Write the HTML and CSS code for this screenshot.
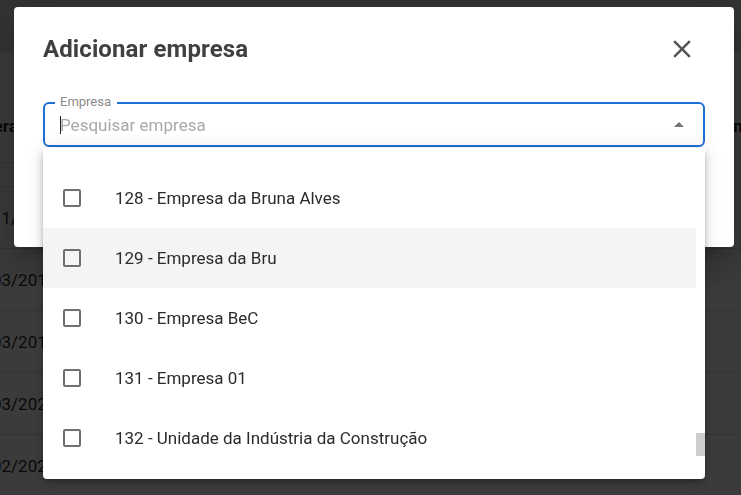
FILE: index.html
```html
<!DOCTYPE html>
<html lang="pt-BR">
<head>
<meta charset="utf-8">
<title>Adicionar empresa</title>
<link rel="stylesheet" href="styles.css">
</head>
<body>
<div class="page">
  <div class="topbar"></div>
  <div class="table">
    <div class="thead">
      <div class="th">Geração</div>
      <div class="th">Unidade</div>
    </div>
    <div class="filter"></div>
    <div class="tr"><span class="td">11/2018</span></div>
    <div class="tr"><span class="td">03/2019</span></div>
    <div class="tr"><span class="td">03/2019</span></div>
    <div class="tr"><span class="td">03/2020</span></div>
    <div class="tr"><span class="td">02/2020</span></div>
  </div>
</div>

<div class="backdrop"></div>

<div class="modal" role="dialog">
  <div class="modal-head">
    <h2 class="title">Adicionar empresa</h2>
    <button class="close" aria-label="Fechar">
      <svg width="24" height="24" viewBox="0 0 24 24"><path d="M19 6.41 17.59 5 12 10.59 6.41 5 5 6.41 10.59 12 5 17.59 6.41 19 12 13.41 17.59 19 19 17.59 13.41 12z" fill="#555"/></svg>
    </button>
  </div>
  <div class="field">
    <span class="label">Empresa</span>
    <span class="caret"></span>
    <span class="placeholder">Pesquisar empresa</span>
    <svg class="arrow" width="24" height="24" viewBox="0 0 24 24"><path d="M7 14l5-5 5 5z" fill="#757575"/></svg>

    <div class="dropdown">
      <ul class="list">
        <li class="item"><span class="box"></span><span class="text">128 - Empresa da Bruna Alves</span></li>
        <li class="item hover"><span class="box"></span><span class="text">129 - Empresa da Bru</span></li>
        <li class="item"><span class="box"></span><span class="text">130 - Empresa BeC</span></li>
        <li class="item"><span class="box"></span><span class="text">131 - Empresa 01</span></li>
        <li class="item"><span class="box"></span><span class="text">132 - Unidade da Indústria da Construção</span></li>
      </ul>
      <div class="scrollbar"><div class="thumb"></div></div>
    </div>
  </div>
</div>
</body>
</html>
```
FILE: styles.css
```css
* { box-sizing: border-box; }
html, body { margin: 0; padding: 0; }
body {
  font-family: Roboto, "Noto Sans", "Liberation Sans", sans-serif;
  width: 741px;
  height: 495px;
  overflow: hidden;
  background: #fff;
}

/* background page */
.page {
  width: 741px;
  height: 495px;
  overflow: hidden;
  background: #fff;
  color: rgba(0,0,0,0.87);
}
.topbar {
  height: 53px;
  background: #dcdcdc;
  border-bottom: 1px solid #e6e6e6;
}
.table {
  margin-left: -5px;
  width: 800px;
}
.thead {
  display: grid;
  grid-template-columns: 740px auto;
  margin-left: -13px;
  height: 110px;
  align-items: end;
  padding-bottom: 26px;
  border-bottom: 1px solid #dcdcdc;
  font-weight: 700;
  font-size: 17px;
}
.filter {
  height: 24px;
  border-bottom: 1px solid #dcdcdc;
}
.tr {
  height: 62px;
  display: flex;
  align-items: center;
  border-bottom: 1px solid #dcdcdc;
  font-size: 17px;
}
.td { margin-left: -3px; }

.backdrop {
  position: fixed;
  inset: 0;
  background: rgba(0,0,0,0.77);
}

/* dialog */
.modal {
  position: fixed;
  left: 14px;
  top: 7px;
  width: 720px;
  height: 240px;
  background: #fff;
  border-radius: 4px;
  padding: 27px 29px 0 29px;
  box-shadow: 0 11px 15px -7px rgba(0,0,0,.2), 0 24px 38px 3px rgba(0,0,0,.14), 0 9px 46px 8px rgba(0,0,0,.12);
}
.modal-head {
  display: flex;
  align-items: center;
  justify-content: space-between;
  height: 30px;
}
.title {
  margin: 0;
  font-size: 24px;
  font-weight: 700;
  color: #404040;
  letter-spacing: 0.1px;
}
.close {
  border: 0;
  background: none;
  padding: 0;
  margin-right: 8px;
  width: 30px;
  height: 30px;
  display: flex;
  align-items: center;
  justify-content: center;
}
.close svg { width: 30px; height: 30px; }

.field {
  position: relative;
  margin-top: 38px;
  height: 45px;
  border: 2px solid #1e70d4;
  border-radius: 6px;
  display: flex;
  align-items: center;
  padding-left: 15px;
}
.label {
  position: absolute;
  left: 10px;
  top: -10px;
  padding: 0 6px 0 5px;
  background: #fff;
  font-size: 13px;
  line-height: 16px;
  color: #8a8a8a;
}
.caret {
  width: 1px;
  height: 18px;
  background: #222;
  margin-right: -1px;
}
.placeholder {
  font-size: 17px;
  color: #a9a9a9;
  flex: 1;
}
.arrow {
  margin-right: 12px;
}

.dropdown {
  position: absolute;
  left: -2px;
  right: -2px;
  top: 44px;
  height: 331px;
  background: #fff;
  border-radius: 0 0 4px 4px;
  box-shadow: 0 3px 5px -1px rgba(0,0,0,.2), 0 6px 10px 0 rgba(0,0,0,.14), 0 1px 18px 0 rgba(0,0,0,.12);
  display: flex;
  overflow: hidden;
}
.list {
  list-style: none;
  margin: 0;
  padding: 20px 0 11px 0;
  flex: 1;
}
.item {
  height: 60px;
  display: flex;
  align-items: center;
  padding-left: 20px;
}
.item.hover { background: #f4f4f4; }
.box {
  width: 18px;
  height: 18px;
  border: 2px solid #6f6f6f;
  border-radius: 2px;
  margin-right: 34px;
}
.text {
  font-size: 17px;
  color: #2b2b2b;
}
.scrollbar {
  width: 9px;
  padding-top: 285px;
}
.thumb {
  height: 23px;
  background: #cdcdcd;
}
```
